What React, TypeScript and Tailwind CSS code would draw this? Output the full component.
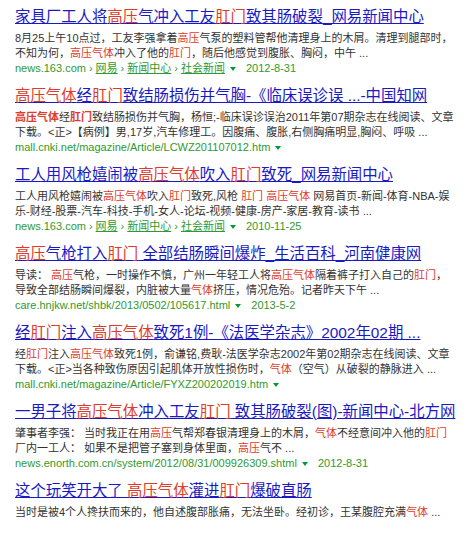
import React from 'react';

interface Result {
  title: string;
  lines: string[];
  url?: string;
  crumbs?: string[];
  date?: string;
  bold?: boolean;
}

const results: Result[] = [
  {
    title: '家具厂工人将{高压}气冲入工友{肛门}致其肠破裂_网易新闻中心',
    lines: [
      '8月25上午10点过，工友李强拿着{高压}气泵的塑料管帮他清理身上的木屑。清理到腿部时，',
      '不知为何，{高压气体}冲入了他的{肛门}，随后他感觉到腹胀、胸闷，中午 ...',
    ],
    url: 'news.163.com',
    crumbs: ['网易', '新闻中心', '社会新闻'],
    date: '2012-8-31',
  },
  {
    title: '{高压气体}经{肛门}致结肠损伤并气胸-《临床误诊误 ...-中国知网',
    lines: [
      '{高压气体}经{肛门}致结肠损伤并气胸，杨恒;-临床误诊误治2011年第07期杂志在线阅读、文章',
      '下载。<正>【病例】男,17岁,汽车修理工。因腹痛、腹胀,右侧胸痛明显,胸闷、呼吸 ...',
    ],
    url: 'mall.cnki.net/magazine/Article/LCWZ201107012.htm',
    bold: true,
  },
  {
    title: '工人用风枪嬉闹被{高压气体}吹入{肛门}致死_网易新闻中心',
    lines: [
      '工人用风枪嬉闹被{高压气体}吹入{肛门}致死,风枪 {肛门} {高压气体} 网易首页-新闻-体育-NBA-娱',
      '乐-财经-股票-汽车-科技-手机-女人-论坛-视频-健康-房产-家居-教育-读书 ...',
    ],
    url: 'news.163.com',
    crumbs: ['网易', '新闻中心', '社会新闻'],
    date: '2010-11-25',
  },
  {
    title: '{高压}气枪打入{肛门} 全部结肠瞬间爆炸_生活百科_河南健康网',
    lines: [
      '导读： {高压}气枪，一时操作不慎，广州一年轻工人将{高压气体}隔着裤子打入自己的{肛门}，',
      '导致全部结肠瞬间爆裂，内脏被大量{气体}挤压，情况危殆。记者昨天下午 ...',
    ],
    url: 'care.hnjkw.net/shbk/2013/0502/105617.html',
    date: '2013-5-2',
  },
  {
    title: '经{肛门}注入{高压气体}致死1例-《法医学杂志》2002年02期 ...',
    lines: [
      '经{肛门}注入{高压气体}致死1例，俞谦铭,费耿-法医学杂志2002年第02期杂志在线阅读、文章',
      '下载。<正>当各种致伤原因引起肌体开放性损伤时，{气体}（空气）从破裂的静脉进入 ...',
    ],
    url: 'mall.cnki.net/magazine/Article/FYXZ200202019.htm',
  },
  {
    title: '一男子将{高压气体}冲入工友{肛门} 致其肠破裂(图)-新闻中心-北方网',
    lines: [
      '肇事者李强： 当时我正在用{高压}气帮郑春银清理身上的木屑，{气体}不经意间冲入他的{肛门}',
      '厂内一工人： 如果不是把管子塞到身体里面，{高压}气不 ...',
    ],
    url: 'news.enorth.com.cn/system/2012/08/31/009926309.shtml',
    date: '2012-8-31',
  },
  {
    title: '这个玩笑开大了 {高压气体}灌进{肛门}爆破直肠',
    lines: ['当时是被4个人搀扶而来的，他自述腹部胀痛，无法坐卧。经初诊，王某腹腔充满{气体} ...'],
  },
];

// split "abc{red}def" into plain / highlighted pieces
const parse = (s: string) =>
  s.split(/(\{[^}]*\})/).filter(Boolean).map(p =>
    p.startsWith('{') ? { hl: true, text: p.slice(1, -1) } : { hl: false, text: p }
  );

const Arrow = () => (
  <span className="ml-[5px] inline-block align-middle border-x-[3px] border-x-transparent border-t-[4px] border-t-[#009933]" />
);

const ResultItem: React.FC<{ r: Result }> = ({ r }) => (
  <div className="mb-[10px]">
    <div className="h-[20px] text-[15.4px] leading-[20px] whitespace-nowrap underline text-[#1a1ac4]">
      {parse(r.title).map((p, i) => (
        <span key={i} className={p.hl ? 'text-[#dd3c2c]' : ''}>{p.text}</span>
      ))}
    </div>
    <div className="mt-[4px] text-[11px] leading-[15px] text-[#333]">
      {r.lines.map((line, i) => (
        <div key={i} className="whitespace-nowrap">
          {parse(line).map((p, j) => (
            <span key={j} className={p.hl ? (r.bold ? 'text-[#dd3c2c] font-semibold' : 'text-[#dd3c2c]') : ''}>
              {p.text}
            </span>
          ))}
        </div>
      ))}
    </div>
    {r.url && (
      <div className="text-[11px] leading-[15px] whitespace-nowrap text-[#2f9a2f]">
        <span>{r.url}</span>
        {r.crumbs?.map(c => (
          <span key={c}>
            <span className="mx-[3px]">›</span>
            <span className="underline">{c}</span>
          </span>
        ))}
        <Arrow />
        {r.date && <span className="ml-[10px]">{r.date}</span>}
      </div>
    )}
  </div>
);

export default function App() {
  return (
    <div className="w-[467px] h-[540px] overflow-hidden bg-white pl-[15px] pt-[7px] font-['Liberation_Sans','Noto_Sans_CJK_SC',sans-serif]">
      {results.map((r, i) => (
        <ResultItem key={i} r={r} />
      ))}
    </div>
  );
}
